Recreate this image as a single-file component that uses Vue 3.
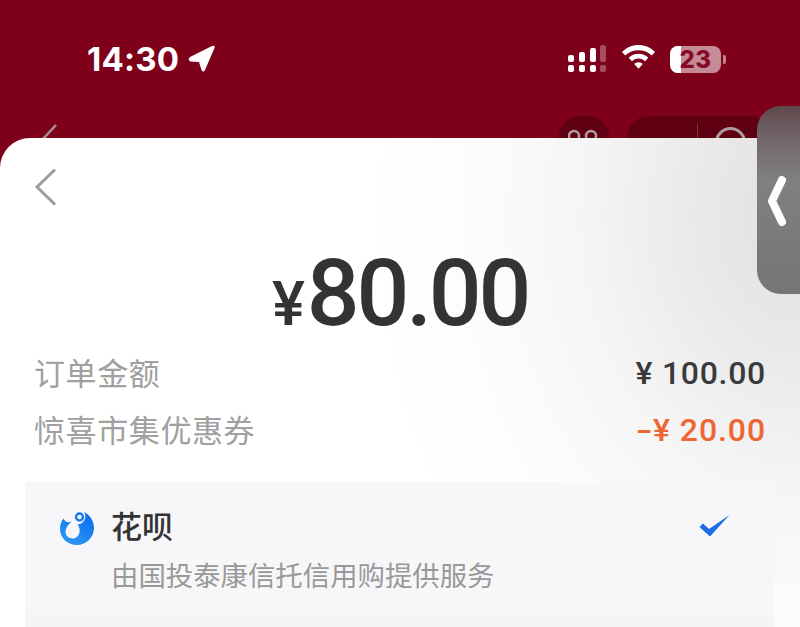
<script setup>
const rows = [
  { label: '订单金额', minus: false, value: '¥ 100.00', cls: 'dark' },
  { label: '惊喜市集优惠券', minus: true, value: '¥ 20.00', cls: 'orange' }
]
</script>

<template>
  <div class="page">
    <header class="top">
      <div class="status">
        <div class="time-wrap">
          <span class="time">14:30</span>
          <svg class="loc" width="28" height="28" viewBox="0 0 28 28">
            <path d="M2 12 24 1Q27.500 0 26.500 3L17 25Q15 28 13.500 25L11 17 2.500 16.500Q-1 14.500 2 12Z" fill="#fff"/>
          </svg>
        </div>
        <div class="indicators">
          <svg class="signal" width="40" height="28" viewBox="1 0 40 28">
            <g fill="#fff">
              <rect x="1" y="10" width="6" height="7" rx="2"/>
              <rect x="12" y="7" width="6" height="10" rx="2"/>
              <rect x="23" y="3" width="6" height="14" rx="2"/>
              <rect x="1" y="20" width="6" height="7" rx="2"/>
              <rect x="12" y="20" width="6" height="7" rx="2"/>
              <rect x="23" y="20" width="6" height="7" rx="2"/>
            </g>
            <g fill="#fff" opacity=".3">
              <rect x="33" y="0" width="6" height="17" rx="2"/>
              <rect x="33" y="20" width="6" height="7" rx="2"/>
            </g>
          </svg>
          <svg class="wifi" width="35" height="26" viewBox="0 0 35 26">
            <path d="M17.500 1C11 1 5.500 3.500 1 8l3.300 3.600C7.800 8 12.500 6.200 17.500 6.200s9.700 1.800 13.200 5.400L34 8C29.500 3.500 24 1 17.500 1Z" fill="#fff"/>
            <path d="M17.500 9.800c-3.800 0-7.200 1.400-9.800 4l3.300 3.500c1.700-1.700 4-2.700 6.500-2.700s4.800 1 6.500 2.700l3.300-3.500c-2.600-2.600-6-4-9.800-4Z" fill="#fff"/>
            <path d="M17.500 18.300c-1.700 0-3.200.7-4.300 1.800l4.300 4.700 4.300-4.700c-1.100-1.100-2.600-1.800-4.300-1.800Z" fill="#fff"/>
          </svg>
          <div class="battery">
            <div class="level"></div>
            <span class="pct">23</span>
          </div>
          <div class="cap"></div>
        </div>
      </div>
      <div class="nav">
        <svg class="nav-back" width="20" height="34" viewBox="0 0 20 34">
          <path d="M16 2 2 17l14 15" fill="none" stroke="#a09098" stroke-width="2.500"/>
        </svg>
        <div class="nav-right">
          <div class="round">
            <svg width="32" height="20" viewBox="0 0 32 20">
              <circle cx="6" cy="9" r="5" fill="none" stroke="#b09ca0" stroke-width="2.500"/>
              <circle cx="23" cy="9" r="5" fill="none" stroke="#b09ca0" stroke-width="2.500"/>
            </svg>
          </div>
          <div class="capsule">
            <div class="divider"></div>
            <div class="ring"></div>
          </div>
        </div>
      </div>
    </header>

    <main class="sheet">
      <svg class="back" width="24" height="38" viewBox="0 0 24 38">
        <path d="M21 1.500 3 19l18 17.500" fill="none" stroke="#9c9c9c" stroke-width="3"/>
      </svg>
      <div class="amount"><span class="yen">¥</span><span class="num">80.00</span></div>
      <div class="rows">
        <div v-for="r in rows" :key="r.label" class="row">
          <span class="label">{{ r.label }}</span>
          <span class="value" :class="r.cls"><span v-if="r.minus" class="minus">-</span>{{ r.value }}</span>
        </div>
      </div>
      <section class="pay">
        <svg class="logo" width="34" height="34" viewBox="0 0 34 34">
          <defs>
            <linearGradient id="hb" x1="0.800" y1="0" x2="0.200" y2="1">
              <stop offset="0" stop-color="#0a6cf0"/>
              <stop offset="1" stop-color="#2f9af0"/>
            </linearGradient>
          </defs>
          <path d="M3.500 7.500C1 10.500 0 14 0 18 0 27 7.500 34 17 34S34 26 34 17C34 10 30 4 24 1 26 4 26 8 23 11 21 13 19 13.500 17.500 13 19 15 20 18 19.500 21 19 25 16 27.500 12.500 27.500 8.500 27.500 5.500 24.500 5.500 21 5.500 17 8 14 11.500 10.500 8 12 5 11 3.500 7.500Z" fill="url(#hb)"/>
          <circle cx="19.500" cy="6" r="3.500" fill="none" stroke="#1478ee" stroke-width="2.400"/>
        </svg>
        <div class="pay-text">
          <div class="pay-title">花呗</div>
          <div class="pay-sub">由国投泰康信托信用购提供服务</div>
        </div>
        <svg class="check" width="32" height="24" viewBox="0 0 32 24">
          <path d="M.5 13 4 9.500l6 5.500L30.500 1 11 22.500Z" fill="#1a6fe8"/>
        </svg>
      </section>
    </main>

    <div class="handle">
      <svg width="22" height="52" viewBox="0 0 22 52">
        <path d="M16 4 6 25l10 21" fill="none" stroke="#fff" stroke-width="8" stroke-linecap="round" stroke-linejoin="round"/>
      </svg>
    </div>
  </div>
</template>

<style>
html, body { margin: 0; background: #7f001b; }
</style>

<style scoped>
.page {
  position: relative;
  width: 800px;
  height: 627px;
  overflow: hidden;
  background: #7f001b;
  font-family: "Noto Sans CJK SC", Roboto, sans-serif;
}
.top { height: 138px; overflow: hidden; }
.status {
  display: flex;
  justify-content: space-between;
  align-items: center;
  height: 42px;
  padding: 38px 74px 0 87px;
}
.time-wrap { display: flex; align-items: center; gap: 9px; }
.time {
  font-family: Inter, Roboto, sans-serif;
  font-size: 33px;
  font-weight: 700;
  color: #fff;
  letter-spacing: .2px;
}
.loc { margin-top: -1px; }
.indicators { display: flex; align-items: center; }
.signal { margin-right: 13px; }
.wifi { margin-right: 14px; margin-top: -4px; }
.battery {
  position: relative;
  width: 51px;
  height: 27px;
  border-radius: 8px;
  background: rgba(255, 255, 255, .55);
  overflow: hidden;
  display: flex;
  align-items: center;
  justify-content: center;
}
.level { position: absolute; left: 0; top: 0; bottom: 0; width: 11px; background: #fff; }
.pct {
  position: relative;
  font-family: Inter, sans-serif;
  font-size: 24px;
  font-weight: 800;
  color: #860a28;
  letter-spacing: .5px;
}
.cap { width: 3px; height: 9px; margin-left: 2px; border-radius: 0 2px 2px 0; background: rgba(255,255,255,.5); }
.nav {
  display: flex;
  justify-content: space-between;
  margin-top: 44px;
  padding: 0 28px 0 40px;
}
.nav-back { margin-top: -1px; }
.nav-right { display: flex; gap: 17px; margin-top: -9px; }
.round {
  width: 52px;
  height: 52px;
  border-radius: 50%;
  background: #5e0012;
  display: flex;
  justify-content: center;
  padding-top: 12px;
  box-sizing: border-box;
}
.capsule {
  position: relative;
  width: 145px;
  height: 54px;
  margin-top: 1px;
  border-radius: 22px;
  background: #5e0012;
}
.divider { position: absolute; left: 70px; top: 8px; bottom: 0; width: 1px; background: #8a3348; }
.ring {
  position: absolute;
  left: 88px;
  top: 11px;
  width: 25px;
  height: 25px;
  border-radius: 50%;
  border: 3px solid #b09ca0;
}
.sheet {
  position: relative;
  height: 489px;
  box-sizing: border-box;
  border-radius: 30px 0 0 0;
  padding: 0 35px;
  background:
    radial-gradient(ellipse 430px 540px at 100% 80px, #e0e0e0 0%, #e8e8e8 22%, #f5f5f5 50%, #fcfcfc 75%, #fff 100%),
    #fff;
}
.back { position: absolute; left: 34px; top: 30px; }
.amount {
  display: flex;
  align-items: baseline;
  justify-content: center;
  height: 200px;
  box-sizing: border-box;
  padding: 106px 0 0;
  color: #333;
  font-family: Roboto, sans-serif;
  line-height: 100px;
}
.yen { font-size: 62px; font-weight: 500; margin-right: 2px; }
.num { font-size: 93px; font-weight: 500; letter-spacing: -3.200px; }
.rows { margin-top: 6px; }
.row {
  display: flex;
  justify-content: space-between;
  align-items: center;
  height: 57px;
}
.label { font-size: 31px; color: #a0a0a0; letter-spacing: .6px; line-height: 42px; margin: -2px 0 0 -1px; }
.value { font-family: Roboto, sans-serif; font-size: 32px; font-weight: 500; letter-spacing: .7px; margin-right: -1px; line-height: 42px; }
.minus { display: inline-block; width: 9px; margin-right: 8px; transform: scaleX(1.5); transform-origin: left center; }
.dark { color: #3a3a3a; }
.orange { color: #ef6632; letter-spacing: .9px; }
.pay {
  display: flex;
  align-items: flex-start;
  position: absolute;
  left: 25px;
  right: 26px;
  top: 344px;
  height: 145px;
  box-sizing: border-box;
  padding: 25px 43px 0 35px;
  background: linear-gradient(180deg, #f7f7f9 0, #f7f7f9 132px, #f5f5f7 133px);
}
.logo { margin-top: 4px; margin-right: 17px; flex: none; }
.pay-text { flex: 1; }
.pay-title { font-size: 31px; line-height: 36px; font-weight: 500; color: #333; }
.pay-sub { margin-top: 12px; font-size: 27.4px; line-height: 38px; color: #999; }
.check { margin-top: 7px; }
.handle {
  position: absolute;
  right: 0;
  top: 106px;
  width: 43px;
  height: 188px;
  border-radius: 24px 0 0 24px;
  background: linear-gradient(180deg, #60484c 0%, #72676a 18%, #808080 40%, #757575 100%);
  display: flex;
  align-items: center;
}
.handle svg { margin-left: 9px; margin-top: 3px; }
</style>
